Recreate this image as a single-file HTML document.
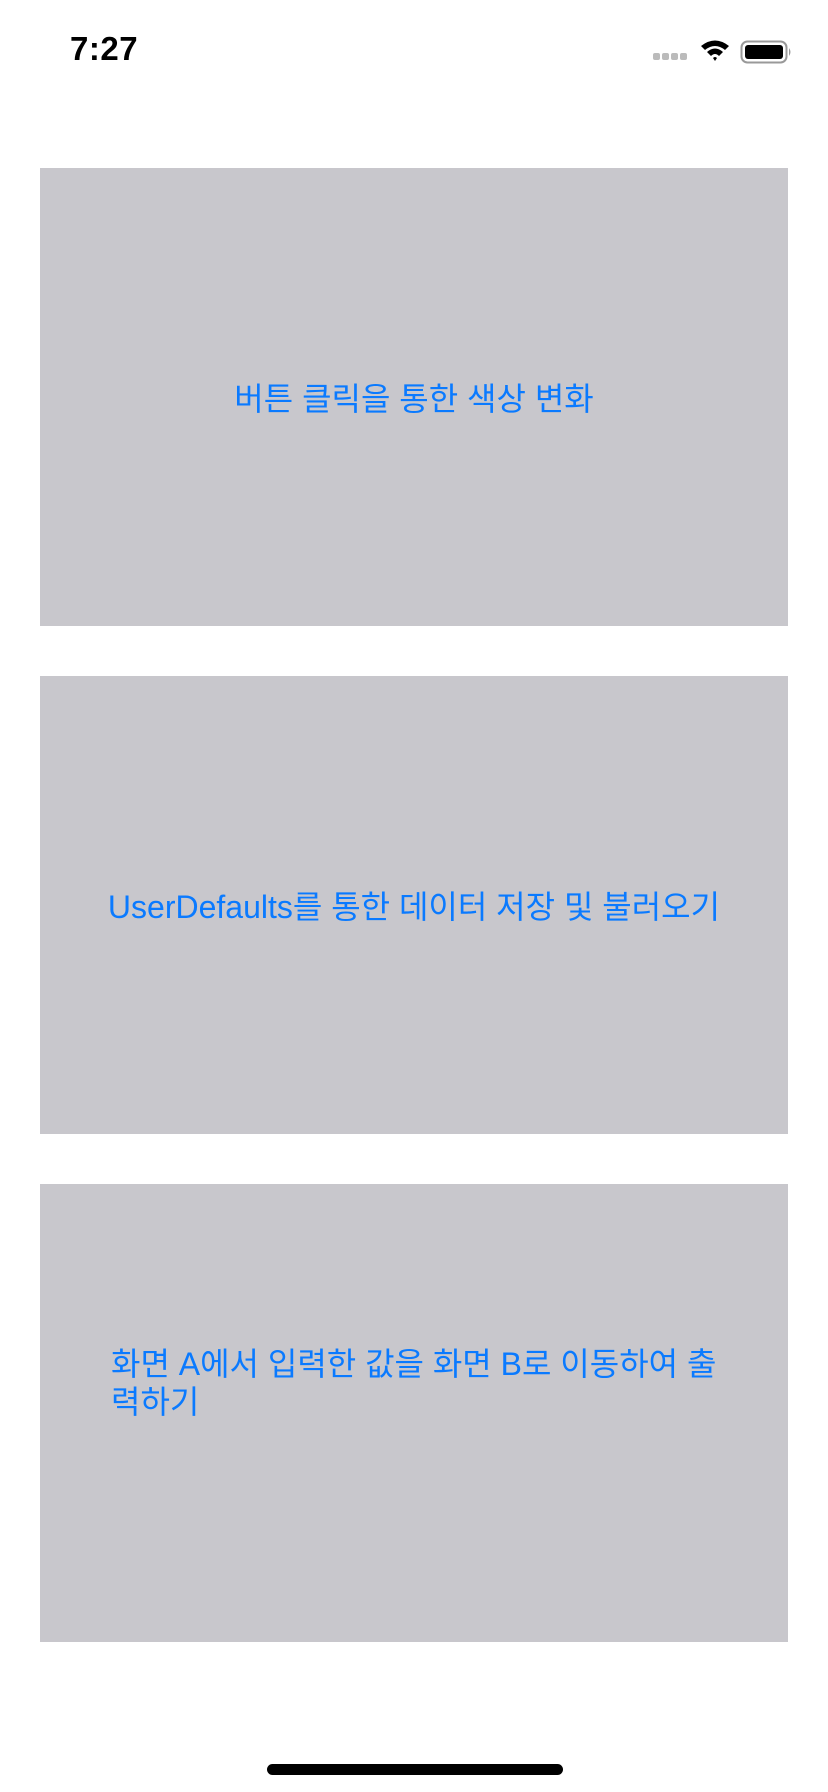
<!DOCTYPE html>
<html><head><meta charset="utf-8"><style>
html,body{margin:0;padding:0;width:828px;height:1792px;background:#fff;overflow:hidden;font-family:"Liberation Sans","Noto Sans CJK KR",sans-serif;}
.box{position:absolute;left:40px;width:748px;height:458px;background:#c8c7cc;display:flex;align-items:center;justify-content:center;color:#0a7aff;font-size:32px;}
.time{position:absolute;left:70px;top:30px;font-size:33px;font-weight:bold;letter-spacing:0.5px;}
</style></head><body>
<div class="time">7:27</div>
<svg style="position:absolute;left:650px;top:36px" width="150" height="30" viewBox="0 0 150 30">
<g fill="#bbb"><rect x="3" y="17" width="7" height="7" rx="2"/><rect x="12" y="17" width="7" height="7" rx="2"/><rect x="21" y="17" width="7" height="7" rx="2"/><rect x="30" y="17" width="7" height="7" rx="2"/></g>
<path d="M51 10 Q65 -1 79 10 L75 14 Q65 6 55 14 Z M57 16 Q65 9 73 16 L69 20 Q65 16 61 20 Z M63 22 L65 25 L67 22 Q65 20 63 22 Z" fill="#000"/>
<rect x="91.5" y="5.5" width="45" height="21" rx="6" fill="none" stroke="#999" stroke-width="2"/>
<rect x="95" y="9" width="38" height="14" rx="3" fill="#000"/>
<path d="M139 12 Q142 16 139 20 Z" fill="#999"/>
</svg>
<div class="box" style="top:168px">버튼 클릭을 통한 색상 변화</div>
<div class="box" style="top:676px">UserDefaults를 통한 데이터 저장 및 불러오기</div>
<div class="box" style="top:1184px;justify-content:flex-start"><div style="margin-left:71px;margin-bottom:60px;width:625px;line-height:38px;word-break:break-all">화면 A에서 입력한 값을 화면 B로 이동하여 출력하기</div></div>
<div style="position:absolute;left:267px;top:1764px;width:296px;height:11px;border-radius:6px;background:#000"></div>
</body></html>
